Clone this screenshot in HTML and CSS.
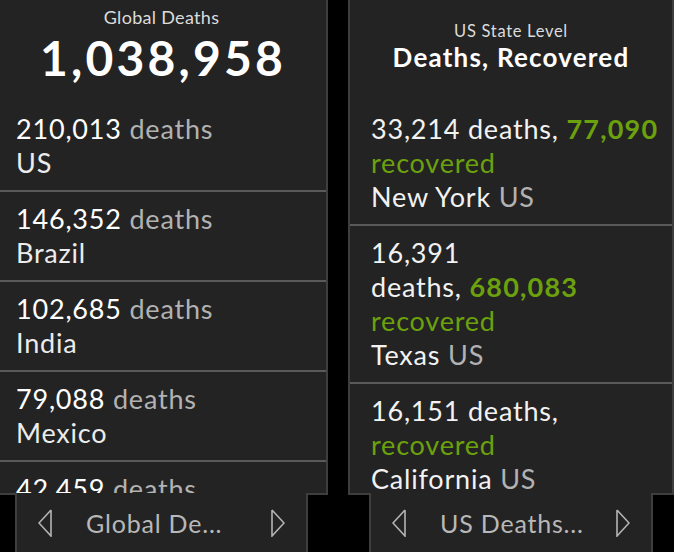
FILE: index.html
```html
<!DOCTYPE html>
<html lang="en">
<head>
<meta charset="utf-8">
<title>COVID-19 Dashboard</title>
<link rel="stylesheet" href="styles.css">
</head>
<body>
<div class="dash">
  <section class="col col-left">
    <div class="panel">
      <header class="head head-left">
        <div class="head-small">Global Deaths</div>
        <div class="head-big">1,038,958</div>
      </header>
      <ul class="list list-left">
        <li class="item"><div><span class="num">210,013</span> <span class="muted">deaths</span></div><div class="place">US</div></li>
        <li class="item"><div><span class="num">146,352</span> <span class="muted">deaths</span></div><div class="place">Brazil</div></li>
        <li class="item"><div><span class="num">102,685</span> <span class="muted">deaths</span></div><div class="place">India</div></li>
        <li class="item"><div><span class="num">79,088</span> <span class="muted">deaths</span></div><div class="place">Mexico</div></li>
        <li class="item"><div><span class="num">42,459</span> <span class="muted">deaths</span></div><div class="place">United Kingdom</div></li>
      </ul>
    </div>
    <nav class="tab tab-left">
      <svg class="arrow" width="14" height="28" viewBox="0 0 14 28"><polyline points="13,1 1,14 13,27 13,1" fill="none" stroke="#b4b4b4" stroke-width="1.6"/></svg>
      <span class="tab-label">Global De...</span>
      <svg class="arrow" width="14" height="28" viewBox="0 0 14 28"><polyline points="1,1 13,14 1,27 1,1" fill="none" stroke="#b4b4b4" stroke-width="1.6"/></svg>
    </nav>
  </section>

  <section class="col col-right">
    <div class="panel">
      <header class="head head-right">
        <div class="head-small">US State Level</div>
        <div class="head-title">Deaths, Recovered</div>
      </header>
      <ul class="list list-right">
        <li class="item">
          <div>33,214 deaths, <span class="green strong">77,090</span></div>
          <div class="green">recovered</div>
          <div>New York <span class="muted">US</span></div>
        </li>
        <li class="item">
          <div>16,391</div>
          <div>deaths, <span class="green strong">680,083</span></div>
          <div class="green">recovered</div>
          <div>Texas <span class="muted">US</span></div>
        </li>
        <li class="item">
          <div>16,151 deaths,</div>
          <div class="green">recovered</div>
          <div>California <span class="muted">US</span></div>
        </li>
      </ul>
    </div>
    <nav class="tab tab-right">
      <svg class="arrow" width="14" height="28" viewBox="0 0 14 28"><polyline points="13,1 1,14 13,27 13,1" fill="none" stroke="#b4b4b4" stroke-width="1.6"/></svg>
      <span class="tab-label">US Deaths...</span>
      <svg class="arrow" width="14" height="28" viewBox="0 0 14 28"><polyline points="1,1 13,14 1,27 1,1" fill="none" stroke="#b4b4b4" stroke-width="1.6"/></svg>
    </nav>
  </section>
</div>
</body>
</html>
```

FILE: styles.css
```css
* { box-sizing: border-box; }

html, body {
  margin: 0;
  padding: 0;
  background: #000;
  overflow: hidden;
}

body {
  width: 674px;
  height: 552px;
  font-family: Lato, "Open Sans", sans-serif;
  color: #f2f2f2;
}

.dash {
  display: flex;
  gap: 20px;
  align-items: flex-start;
}

.col {
  display: flex;
  flex-direction: column;
  flex: none;
}

.col-left {
  width: 333px;
  margin-left: -5px;
}

.col-right {
  width: 326px;
}

.panel {
  height: 495px;
  background: #232323;
  border: 2px solid #3e3e3e;
  border-top: 0;
  overflow: hidden;
}

.head {
  height: 102px;
  text-align: center;
}

.head-left { padding-top: 7px; }
.head-right { padding-top: 22px; }

.head-small {
  font-size: 18px;
  line-height: 1.2;
  color: #dcdcdc;
  letter-spacing: 0.3px;
}

.head-right .head-small {
  font-size: 16.5px;
  letter-spacing: 0.7px;
}

.head-big {
  font-size: 48px;
  line-height: 1.2;
  font-weight: 700;
  color: #fff;
  letter-spacing: 3.2px;
  padding-left: 3px;
}

.head-title {
  font-size: 26px;
  line-height: 1.2;
  font-weight: 700;
  color: #fff;
  letter-spacing: 1.2px;
}

.list {
  list-style: none;
  margin: 0;
  padding: 0;
}

.item {
  padding: 10px 0 10px;
  border-bottom: 2px solid #5a5a5a;
  font-size: 27px;
  line-height: 34px;
  white-space: nowrap;
  letter-spacing: 0.8px;
}

.list-left .item { padding-left: 19px; }
.list-right .item { padding-left: 21px; }

.num { color: #fff; }
.place { color: #ececec; }
.muted { color: #b2b2b2; }
.green { color: #6ca10e; }
.strong { font-weight: 700; letter-spacing: 1.2px; }

.tab {
  position: relative;
  z-index: 1;
  margin: -2px auto 0;
  height: 70px;
  background: #232323;
  border-left: 2px solid #3e3e3e;
  border-right: 2px solid #3e3e3e;
  display: flex;
  align-items: flex-start;
  padding: 16px 21px 0;
  gap: 34px;
}

.tab-left { width: 293px; }
.tab-right { width: 284px; }

.arrow {
  flex: none;
  display: block;
}

.tab-label {
  flex: 1;
  min-width: 0;
  overflow: hidden;
  white-space: nowrap;
  font-size: 25px;
  line-height: 28px;
  letter-spacing: 0.8px;
  color: #b8b8b8;
}
```
